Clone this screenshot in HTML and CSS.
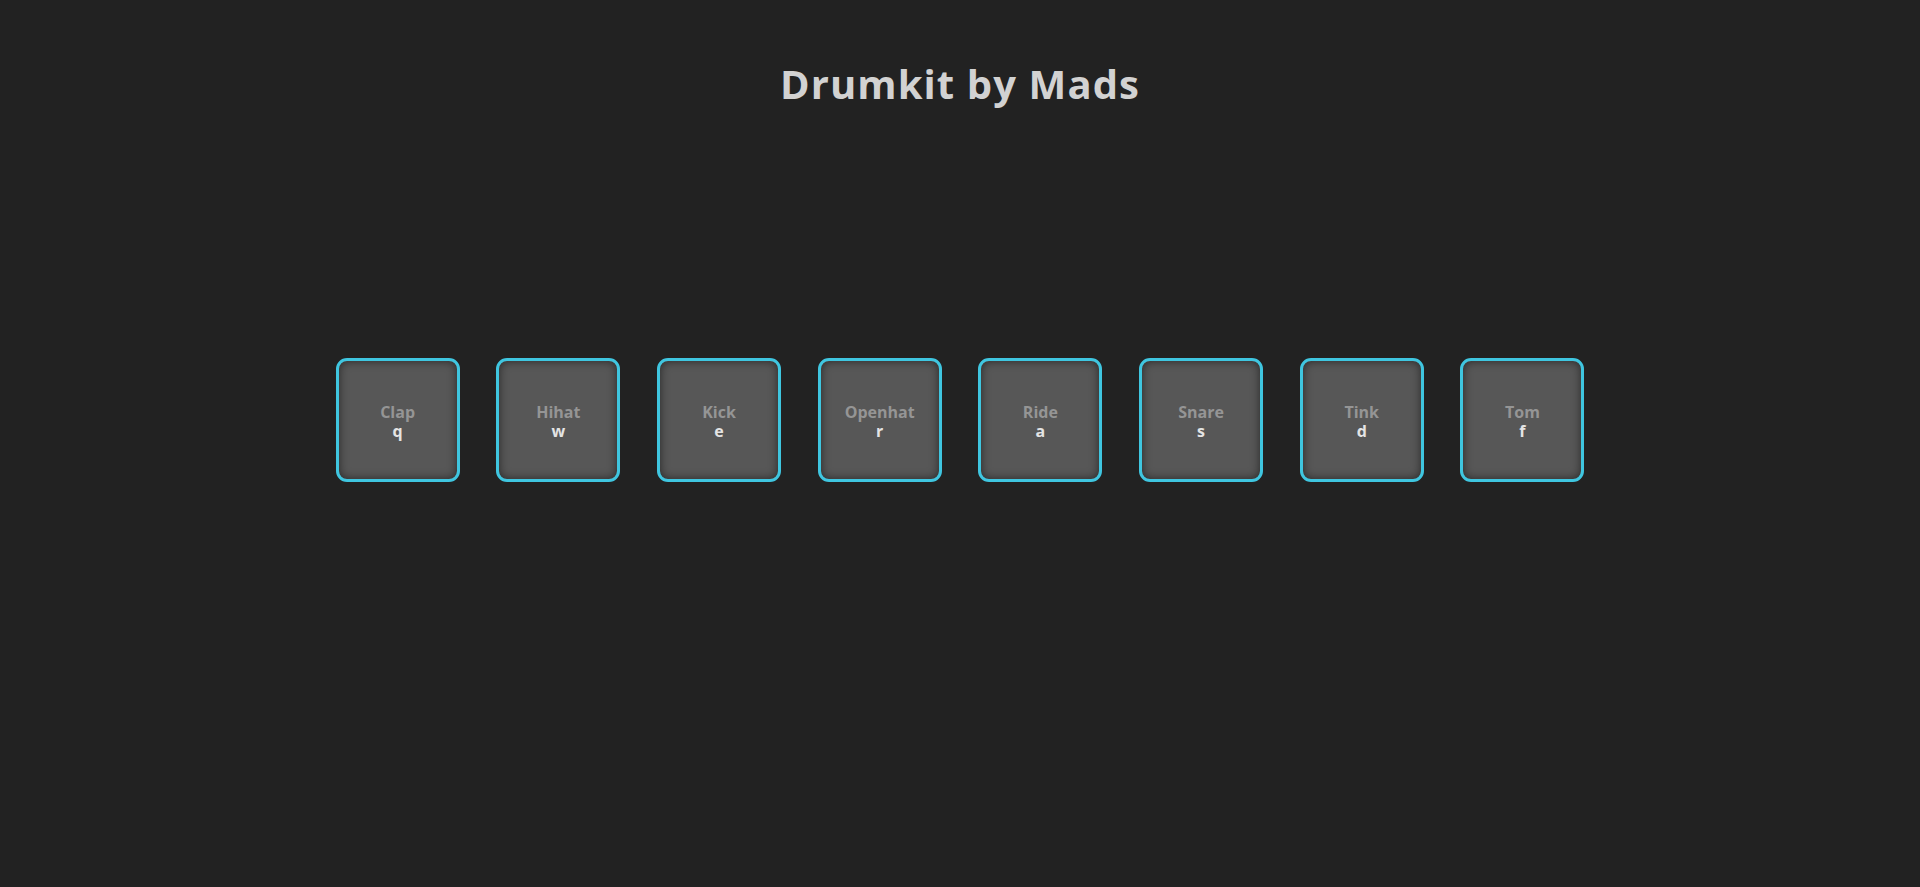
FILE: index.html
```html
<!DOCTYPE html>
<html lang="en">
<head>
<meta charset="utf-8">
<title>Drumkit by Mads</title>
<link rel="stylesheet" href="styles.css">
</head>
<body>
<h1 class="title">Drumkit by Mads</h1>
<div class="keys">
  <div class="key"><span class="sound">Clap</span><kbd class="letter">q</kbd></div>
  <div class="key"><span class="sound">Hihat</span><kbd class="letter">w</kbd></div>
  <div class="key"><span class="sound">Kick</span><kbd class="letter">e</kbd></div>
  <div class="key"><span class="sound">Openhat</span><kbd class="letter">r</kbd></div>
  <div class="key"><span class="sound">Ride</span><kbd class="letter">a</kbd></div>
  <div class="key"><span class="sound">Snare</span><kbd class="letter">s</kbd></div>
  <div class="key"><span class="sound">Tink</span><kbd class="letter">d</kbd></div>
  <div class="key"><span class="sound">Tom</span><kbd class="letter">f</kbd></div>
</div>
</body>
</html>
```
FILE: styles.css
```css
html, body {
  margin: 0;
  padding: 0;
  background: #222222;
  height: 100%;
}
body {
  font-family: "Open Sans", "Noto Sans", sans-serif;
  color: #d4d4d4;
}
.title {
  margin: 0;
  padding-top: 59px;
  text-align: center;
  font-size: 40px;
  line-height: 50px;
  font-weight: 700;
  letter-spacing: 1.1px;
  color: #d2d2d2;
}
.keys {
  display: flex;
  justify-content: center;
  gap: 36.7px;
  margin-top: 249px;
}
.key {
  box-sizing: border-box;
  width: 124px;
  height: 124px;
  padding-top: 3px;
  border: 3px solid #3fc6e0;
  border-radius: 11px;
  background: #575757;
  box-shadow: inset 0 0 10px rgba(0, 0, 0, 0.55);
  display: flex;
  flex-direction: column;
  align-items: center;
  justify-content: center;
  font-weight: 700;
}
.sound {
  font-size: 16px;
  line-height: 19px;
  color: #959595;
}
.letter {
  font-family: "Open Sans", "Noto Sans", sans-serif;
  font-size: 16px;
  line-height: 19px;
  color: #e4e4e4;
}
```
